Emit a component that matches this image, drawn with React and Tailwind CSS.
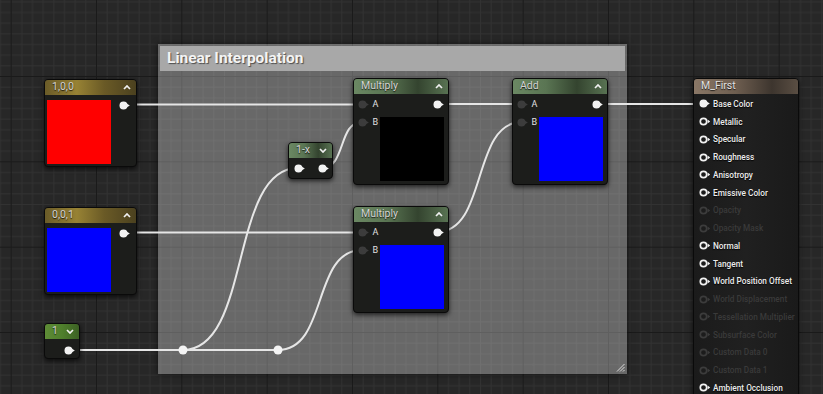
import React from 'react';

// Material graph: constants feeding a hand-built lerp into the material output node.

const FONT = "font-['Roboto','Liberation_Sans',sans-serif]";

function Pin({ kind = 'on' }) {
  const light = '#f2f2f2';
  const dim = '#3c3c3c';
  if (kind === 'ring' || kind === 'ringdim') {
    const c = kind === 'ring' ? light : dim;
    return (
      <svg width="12" height="9" viewBox="0 0 12 9" className="shrink-0">
        <circle cx="4.5" cy="4.5" r="3.2" fill="none" stroke={c} strokeWidth="1.7" />
        <polygon points="8.6,2.6 11.2,4.5 8.6,6.4" fill={c} />
      </svg>
    );
  }
  const c = kind === 'on' ? light : dim;
  return (
    <svg width="12" height="9" viewBox="0 0 12 9" className="shrink-0">
      <circle cx="4.5" cy="4.5" r="4" fill={c} />
      <polygon points="8,2.8 10.8,4.5 8,6.2" fill={c} />
    </svg>
  );
}

function Chevron({ down }) {
  return (
    <svg width="8" height="5" viewBox="0 0 8 5" className="shrink-0">
      <polyline
        points={down ? '1,1 4,4 7,1' : '1,4 4,1 7,4'}
        fill="none"
        stroke="#f0f0f0"
        strokeWidth="1.7"
      />
    </svg>
  );
}

function Node({ className, head, title, down, children }) {
  return (
    <div
      className={`absolute flex flex-col overflow-hidden rounded-[4px] border border-[#0a0a0a] bg-[#1c1d1b] shadow-[0_2px_5px_rgba(0,0,0,0.7)] ${className}`}
    >
      <div className={`flex h-[15px] shrink-0 items-center justify-between pl-[7px] pr-[5px] ${head}`}>
        <span className="text-[10.5px] leading-none text-[#d4d4d4] [text-shadow:0_1px_1px_rgba(0,0,0,0.8)]">
          {title}
        </span>
        <Chevron down={down} />
      </div>
      {children}
    </div>
  );
}

const gold =
  'bg-[linear-gradient(90deg,#6a5b28_0%,#978234_35%,#6a5a26_65%,#4b411f_100%)]';
const green =
  'bg-[linear-gradient(90deg,#6b8863_0%,#5a7553_35%,#34442f_68%,#587252_100%)]';
const brightGreen =
  'bg-[linear-gradient(90deg,#5e8c36_0%,#4f7f2c_50%,#3c6124_100%)]';
const tan =
  'bg-[linear-gradient(90deg,#8a7766_0%,#6e5e50_40%,#3d352e_75%,#5a4e43_100%)]';

function ConstNode({ className, title, color }) {
  return (
    <Node className={className} head={gold} title={title}>
      <div className="flex items-start pl-[2px] pt-[5px]">
        <div className={`h-16 w-16 ${color}`} />
        <div className="ml-[8px] mt-[1px]">
          <Pin />
        </div>
      </div>
    </Node>
  );
}

function MathNode({ className, title, swatch }) {
  return (
    <Node className={className} head={green} title={title}>
      <div className="flex pt-[1px]">
        <div className="flex w-[26px] flex-col">
          {['A', 'B'].map((l) => (
            <div key={l} className="flex h-[18px] items-center pl-[3.5px]">
              <Pin kind="off" />
              <span className="ml-[3px] text-[9px] leading-none text-[#e0e0e0]">{l}</span>
            </div>
          ))}
        </div>
        <div className="flex flex-1 flex-col">
          <div className="flex h-[18px] items-center justify-end pr-[3px]">
            <Pin />
          </div>
          <div className={`mt-[4px] h-16 w-16 ${swatch}`} />
        </div>
      </div>
    </Node>
  );
}

const inputs = [
  ['Base Color', 'on'],
  ['Metallic', 'ring'],
  ['Specular', 'ring'],
  ['Roughness', 'ring'],
  ['Anisotropy', 'ring'],
  ['Emissive Color', 'ring'],
  ['Opacity', 'ringdim'],
  ['Opacity Mask', 'ringdim'],
  ['Normal', 'ring'],
  ['Tangent', 'ring'],
  ['World Position Offset', 'ring'],
  ['World Displacement', 'ringdim'],
  ['Tessellation Multiplier', 'ringdim'],
  ['Subsurface Color', 'ringdim'],
  ['Custom Data 0', 'ringdim'],
  ['Custom Data 1', 'ringdim'],
  ['Ambient Occlusion', 'ring'],
];

function wire(x1, y1, x2, y2) {
  const k = Math.max((x2 - x1) * 0.6, 20);
  return `M${x1},${y1} C${x1 + k},${y1} ${x2 - k},${y2} ${x2},${y2}`;
}

function Grid() {
  return (
    <svg className="absolute inset-0" width="823" height="394">
      <defs>
        <pattern id="cells" x="10.667" y="76" width="85.333" height="85.333" patternUnits="userSpaceOnUse">
          {[1, 2, 3, 4, 5, 6, 7].map((i) => (
            <g key={i} stroke="#323232" strokeWidth="1">
              <line x1={i * 10.667 + 0.5} y1="0" x2={i * 10.667 + 0.5} y2="85.333" />
              <line x1="0" y1={i * 10.667 + 0.5} x2="85.333" y2={i * 10.667 + 0.5} />
            </g>
          ))}
          <line x1="0.5" y1="0" x2="0.5" y2="85.333" stroke="#1a1a1a" />
          <line x1="0" y1="0.5" x2="85.333" y2="0.5" stroke="#1a1a1a" />
        </pattern>
      </defs>
      <rect width="823" height="394" fill="#272727" />
      <rect width="823" height="394" fill="url(#cells)" />
    </svg>
  );
}

function Wires() {
  return (
    <svg className="absolute inset-0" width="823" height="394">
      <g fill="none" stroke="#e6e6e6" strokeWidth="2">
        <path d="M124,104.5 H362" />
        <path d="M437,104 H522" />
        <path d="M597,104 H703" />
        <path d="M124,232.5 H362" />
        <path d="M68,350 H278" />
        <path d={wire(183, 350, 298, 168)} />
        <path d={wire(278, 350, 362, 250)} />
        <path d={wire(322, 168, 362, 122)} />
        <path d={wire(437, 232, 522, 122)} />
      </g>
      <circle cx="183" cy="350" r="4.5" fill="#f4f4f4" />
      <circle cx="278" cy="350" r="4.5" fill="#f4f4f4" />
    </svg>
  );
}

export default function App() {
  return (
    <div className={`relative h-[394px] w-[823px] overflow-hidden bg-[#272727] ${FONT}`}>
      <Grid />

      <div className="absolute left-[158px] top-[44px] h-[330px] w-[469px] bg-white/30 p-[2px] shadow-[0_0_6px_rgba(0,0,0,0.6)]">
        <div className="flex h-[25px] items-center bg-[#a8a8a8] px-[7px]">
          <span className="text-[15.5px] font-bold leading-none text-[#f4f4f4] [text-shadow:1px_1px_1px_rgba(0,0,0,0.55)]">
            Linear Interpolation
          </span>
        </div>
        <svg className="absolute bottom-[2px] right-[2px]" width="9" height="9" viewBox="0 0 9 9">
          <g stroke="#d8d8d8" strokeWidth="1">
            <line x1="8.5" y1="1" x2="1" y2="8.5" />
            <line x1="8.5" y1="4" x2="4" y2="8.5" />
            <line x1="8.5" y1="7" x2="7" y2="8.5" />
          </g>
        </svg>
      </div>

      <Wires />

      <ConstNode className="left-[44px] top-[79px] h-[88px] w-[93px]" title="1,0,0" color="bg-[#ff0000]" />
      <ConstNode className="left-[44px] top-[207px] h-[88px] w-[93px]" title="0,0,1" color="bg-[#0000ff]" />

      <Node className="left-[44px] top-[323px] h-[36px] w-[36px]" head={brightGreen} title="1" down>
        <div className="ml-[18.5px] mt-[6.5px]">
          <Pin />
        </div>
      </Node>

      <Node className="left-[288px] top-[142px] h-[37px] w-[45px]" head={green} title="1-x" down>
        <div className="ml-[4.5px] mt-[5.5px] flex gap-[12px]">
          <Pin />
          <Pin />
        </div>
      </Node>

      <MathNode className="left-[353px] top-[78px] h-[107px] w-[96px]" title="Multiply" swatch="bg-black" />
      <MathNode className="left-[512px] top-[78px] h-[107px] w-[96px]" title="Add" swatch="bg-[#0000ff]" />
      <MathNode className="left-[353px] top-[206px] h-[107px] w-[96px]" title="Multiply" swatch="bg-[#0000ff]" />

      <div className="absolute left-[693px] top-[78px] flex h-[340px] w-[106px] flex-col overflow-hidden rounded-[4px] border border-[#0a0a0a] bg-[linear-gradient(90deg,#1b1b1b,#202020_50%,#1a1a1a)] shadow-[0_2px_5px_rgba(0,0,0,0.7)]">
        <div className={`flex h-[15px] shrink-0 items-center pl-[7px] ${tan}`}>
          <span className="text-[10.5px] leading-none text-[#e2e2e2] [text-shadow:0_1px_1px_rgba(0,0,0,0.8)]">M_First</span>
        </div>
        <div className="flex flex-col pt-[1px]">
          {inputs.map(([label, kind]) => (
            <div key={label} className="flex h-[17.75px] items-center pl-[5px]">
              <Pin kind={kind} />
              <span
                className={`ml-[2px] whitespace-nowrap text-[8.25px] font-medium leading-none ${
                  kind === 'ringdim' ? 'text-[#3a3a3a]' : 'text-[#ececec] [text-shadow:0_1px_1px_rgba(0,0,0,0.9)]'
                }`}
              >
                {label}
              </span>
            </div>
          ))}
        </div>
      </div>
    </div>
  );
}
